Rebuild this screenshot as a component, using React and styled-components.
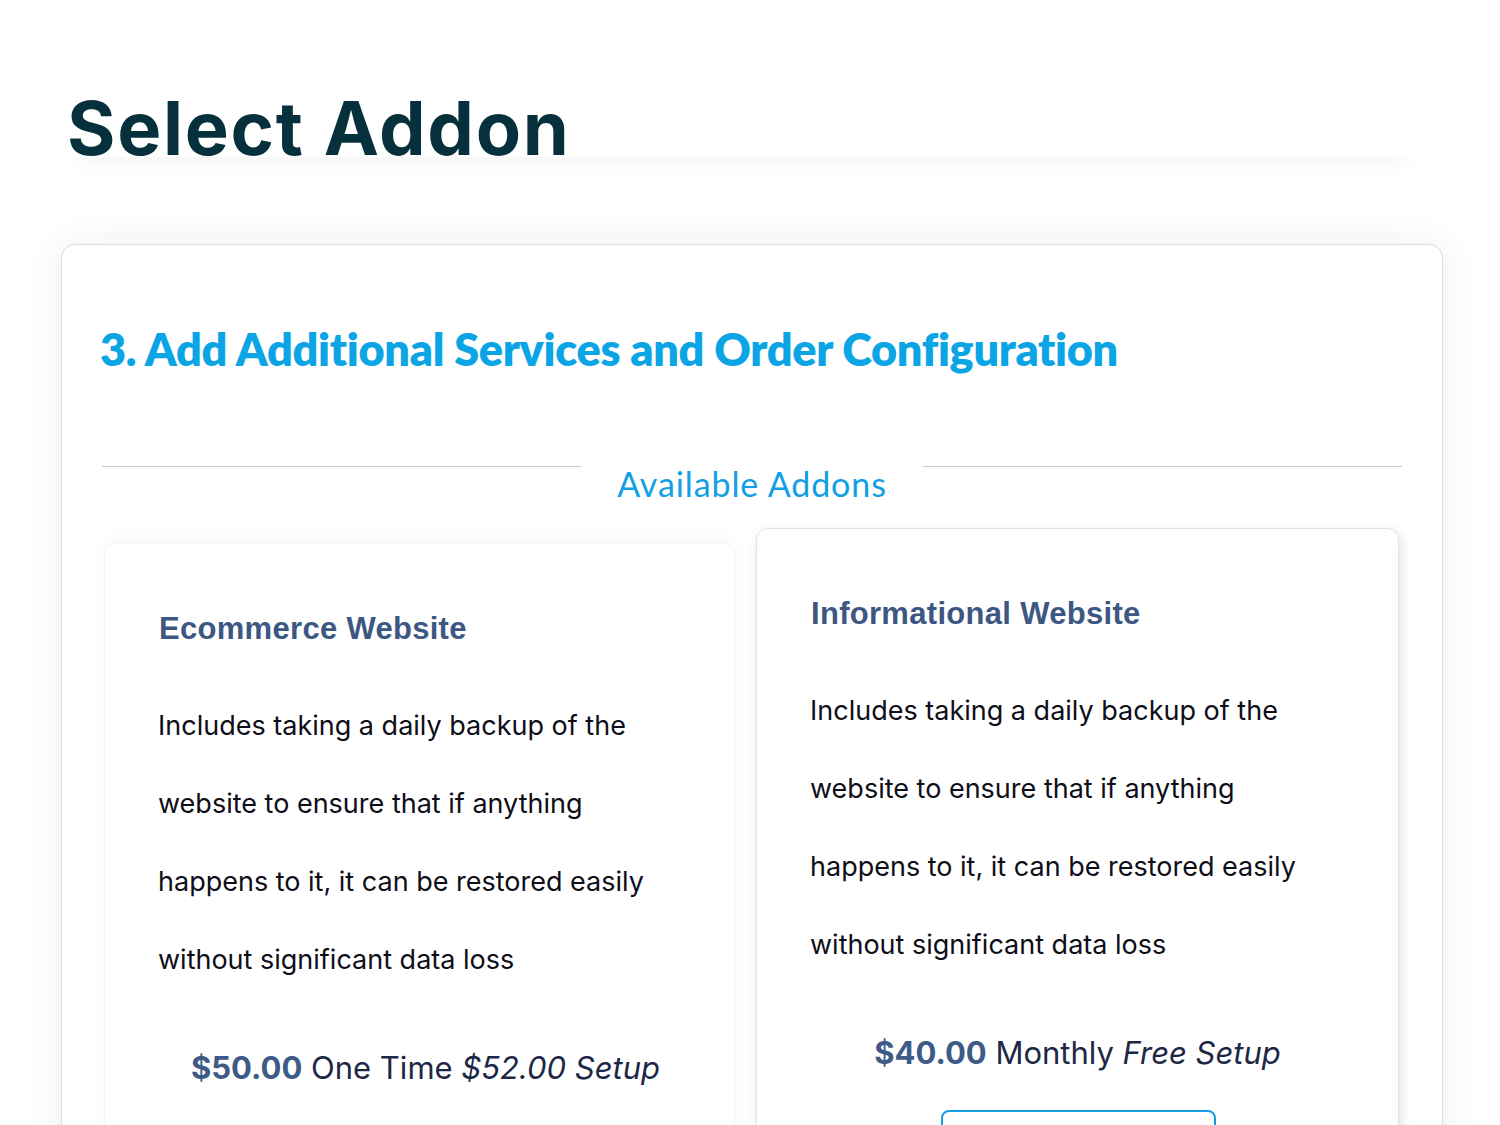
import React from 'react';
import styled, { createGlobalStyle } from 'styled-components';

const GlobalStyle = createGlobalStyle`
  html, body {
    margin: 0;
    padding: 0;
    background: #fff;
    overflow: hidden;
  }
  body {
    font-family: Inter, "Liberation Sans", sans-serif;
  }
`;

const Page = styled.div`
  padding: 0 57px 0 61px;
`;

const Header = styled.header`
  margin: 0 20px 0 0;
  padding: 83px 0 0 6px;
  height: 74px;
  background: #fff;
  box-shadow: 0 18px 22px -16px rgba(0, 0, 0, 0.06);
`;

const PageTitle = styled.h1`
  margin: 0;
  font-family: Inter, sans-serif;
  font-weight: 700;
  font-size: 74px;
  line-height: normal;
  letter-spacing: 1.7px;
  color: #05303c;
`;

const Panel = styled.section`
  margin-top: 87px;
  padding: 77px 40px 0;
  background: #fff;
  border: 1px solid #dcdcdc;
  border-radius: 14px;
  box-shadow: 0 0 40px rgba(0, 0, 0, 0.07);
  height: 900px;
`;

const SectionTitle = styled.h2`
  margin: 0 0 0 -2px;
  font-family: Lato, "Open Sans", sans-serif;
  font-weight: 800;
  font-size: 45px;
  line-height: normal;
  letter-spacing: -0.3px;
  color: #0ba5e6;
`;

const Divider = styled.div`
  display: flex;
  align-items: flex-start;
  gap: 36px;
  margin-top: 87px;
`;

const Rule = styled.span`
  flex: 1;
  height: 1px;
  margin-top: 3px;
  background: #c9c9c9;
`;

const DividerLabel = styled.span`
  font-family: Lato, sans-serif;
  font-size: 34px;
  line-height: normal;
  letter-spacing: 0.9px;
  color: #129fe6;
`;

const Addons = styled.div`
  display: grid;
  grid-template-columns: 631px 643px;
  gap: 21px;
  margin: 39px 3px 0 2px;
`;

const AddonCard = styled.article`
  padding: 67px 40px 40px 57px;
  background: #fff;
  border: 1px solid ${(p) => (p.$active ? '#e2e2e2' : '#f5f5f5')};
  border-radius: 12px;
  box-shadow: ${(p) =>
    p.$active
      ? '2px 4px 12px rgba(0, 0, 0, 0.12)'
      : '0 -6px 14px rgba(0, 0, 0, 0.03)'};
  transform: ${(p) => (p.$active ? 'translateY(-15px)' : 'none')};
`;

const AddonName = styled.h3`
  margin: 0 0 0 -3px;
  font-family: "Liberation Sans", Arial, sans-serif;
  font-weight: 700;
  font-size: 31px;
  line-height: normal;
  letter-spacing: 0.3px;
  color: #3d5783;
`;

const Description = styled.p`
  margin: 40px 0 0 -4px;
  font-family: Inter, sans-serif;
  font-size: 27px;
  line-height: 78px;
  color: #0e0e18;
`;

const Price = styled.div`
  margin: 50px -40px 0 ${(p) => (p.$active ? '-57px' : '-45px')};
  text-align: center;
  font-family: Inter, sans-serif;
  font-size: 31px;
  line-height: normal;
  color: #1d2746;
`;

const Amount = styled.strong`
  font-weight: 700;
  color: #3e5b87;
`;

const Setup = styled.em`
  font-style: italic;
`;

const Choose = styled.button`
  display: block;
  width: 275px;
  height: 56px;
  margin: 39px auto 0;
  position: relative;
  left: -8px;
  background: #fff;
  border: 2px solid #169fe0;
  border-radius: 8px;
  font-family: Inter, sans-serif;
  font-size: 20px;
  color: #169fe0;
`;

const addons = [
  {
    name: 'Ecommerce Website',
    amount: '$50.00',
    cycle: 'One Time',
    setup: '$52.00 Setup',
  },
  {
    name: 'Informational Website',
    amount: '$40.00',
    cycle: 'Monthly',
    setup: 'Free Setup',
    active: true,
  },
];

export default function App() {
  return (
    <>
      <GlobalStyle />
      <Page>
        <Header>
          <PageTitle>Select Addon</PageTitle>
        </Header>
        <Panel>
          <SectionTitle>3. Add Additional Services and Order Configuration</SectionTitle>
          <Divider>
            <Rule />
            <DividerLabel>Available Addons</DividerLabel>
            <Rule />
          </Divider>
          <Addons>
            {addons.map((a) => (
              <AddonCard key={a.name} $active={a.active}>
                <AddonName>{a.name}</AddonName>
                <Description>
                  Includes taking a daily backup of the
                  <br />
                  website to ensure that if anything
                  <br />
                  happens to it, it can be restored easily
                  <br />
                  without significant data loss
                </Description>
                <Price $active={a.active}>
                  <Amount>{a.amount}</Amount> {a.cycle} <Setup>{a.setup}</Setup>
                </Price>
                <Choose aria-label="Add to cart" />
              </AddonCard>
            ))}
          </Addons>
        </Panel>
      </Page>
    </>
  );
}
